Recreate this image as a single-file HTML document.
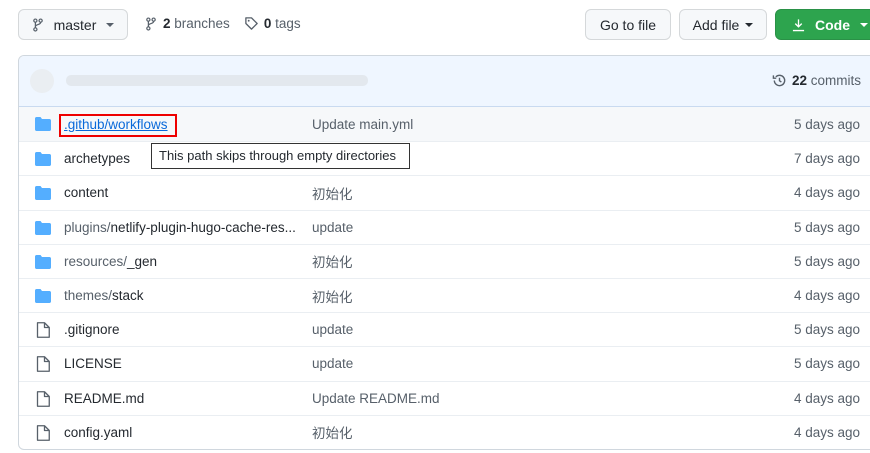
<!DOCTYPE html><html><head><meta charset="utf-8"><style>
*{box-sizing:border-box}body{margin:0;width:870px;height:453px;overflow:hidden;background:#fff;font-family:"Liberation Sans","Noto Sans CJK SC",sans-serif;font-size:13.5px;color:#24292f;position:relative}
.btn{position:absolute;top:9px;height:31px;border:1px solid #d5d8da;border-radius:6px;background:#f6f8fa;display:flex;align-items:center;justify-content:center;font-size:14px}
.caret{display:inline-block;width:0;height:0;border-left:4px solid transparent;border-right:4px solid transparent;border-top:4px solid currentColor;margin-left:6px}
.box{position:absolute;left:18px;top:55px;width:870px;height:395px;border:1px solid #d0d7de;border-radius:6px;overflow:hidden}
.hdr{height:51px;background:#eff6ff;border-bottom:1px solid #c9daf0;position:relative}
.row{height:34.2px;border-top:1px solid #eaeef2;position:relative;display:flex;align-items:center;white-space:nowrap}
.ic{position:absolute;left:16px;top:10px}
.n{position:absolute;left:45px}
.m{position:absolute;left:293px}
.d{position:absolute;right:27px;color:#57606a}
</style></head><body>
<div class="btn" style="left:18px;width:110px"><svg width="12" height="14" viewBox="0 0 12 16" style="margin-right:10px"><circle cx="3" cy="3" r="1.8" fill="none" stroke="#57606a" stroke-width="1.4"/><circle cx="3" cy="13" r="1.8" fill="none" stroke="#57606a" stroke-width="1.4"/><circle cx="9" cy="3" r="1.8" fill="none" stroke="#57606a" stroke-width="1.4"/><path d="M3 5v6M9 5c0 3-6 2-6 5" fill="none" stroke="#57606a" stroke-width="1.4"/></svg>master<span class="caret" style="margin-left:10px;color:#57606a"></span></div>
<div style="position:absolute;left:145px;top:16px;color:#57606a;display:flex;align-items:center"><svg width="12" height="14" viewBox="0 0 12 16" style="margin-right:6px"><circle cx="3" cy="3" r="1.8" fill="none" stroke="#57606a" stroke-width="1.4"/><circle cx="3" cy="13" r="1.8" fill="none" stroke="#57606a" stroke-width="1.4"/><circle cx="9" cy="3" r="1.8" fill="none" stroke="#57606a" stroke-width="1.4"/><path d="M3 5v6M9 5c0 3-6 2-6 5" fill="none" stroke="#57606a" stroke-width="1.4"/></svg><b style="color:#24292f">2</b>&nbsp;branches<svg width="15" height="15" viewBox="0 0 16 16" style="margin:0 5px 0 14px"><path d="M2 2h6l6 6-6 6-6-6z" fill="none" stroke="#57606a" stroke-width="1.4" stroke-linejoin="round"/><circle cx="5" cy="5" r="1" fill="#57606a"/></svg><b style="color:#24292f">0</b>&nbsp;tags</div>
<div class="btn" style="left:585px;width:86px">Go to file</div>
<div class="btn" style="left:679px;width:88px">Add file<span class="caret"></span></div>
<div class="btn" style="left:775px;width:110px;background:#2da44e;border-color:#2a9147;color:#fff;font-weight:bold;justify-content:flex-start;padding-left:16px"><svg width="13" height="14" viewBox="0 0 14 14" style="margin-right:10px"><path d="M7 1v8M3.5 5.5L7 9l3.5-3.5M1 13h12" fill="none" stroke="#fff" stroke-width="1.4"/></svg>Code<span class="caret" style="margin-left:10px"></span></div>
<div class="box">
<div class="hdr"><div style="position:absolute;left:11px;top:13px;width:24px;height:24px;border-radius:50%;background:#eaeef2"></div><div style="position:absolute;left:47px;top:19px;width:302px;height:11px;border-radius:5px;background:#e3e8ee"></div>
<div style="position:absolute;right:26px;top:17px;color:#57606a;display:flex;align-items:center"><svg width="15" height="15" viewBox="0 0 16 16" style="margin-right:5px"><path d="M2.5 8a5.5 5.5 0 1 0 1.6-3.9" fill="none" stroke="#57606a" stroke-width="1.5"/><path d="M1.5 2.5v3h3" fill="none" stroke="#57606a" stroke-width="1.5"/><path d="M8 5v3.3l2 1.3" fill="none" stroke="#57606a" stroke-width="1.5"/></svg><b style="color:#24292f">22</b>&nbsp;commits</div></div>
<div id="rows"></div>
</div>
<div style="position:absolute;left:59px;top:114px;width:118px;height:23px;border:2px solid #e00"></div>
<div style="position:absolute;left:151px;top:143px;width:259px;height:26px;border:1px solid #333;background:#fff;padding-left:7px;line-height:24px;font-size:13px;white-space:nowrap">This path skips through empty directories</div>
<script>
var F='<svg class="ic" width="16" height="14" viewBox="0 0 16 14"><path d="M0 1.5C0 .7.7 0 1.5 0h4l1.5 2h7.5c.8 0 1.5.7 1.5 1.5v9c0 .8-.7 1.5-1.5 1.5h-13C.7 14 0 13.3 0 12.5z" fill="#54aeff"/></svg>';
var D='<svg class="ic" width="14" height="16" viewBox="0 0 14 16" style="top:9px;left:17px"><path d="M1.5 .75h7l4.75 4.75v9.75h-11.75z M8.5 .75v4.75h4.75" fill="none" stroke="#57606a" stroke-width="1.3" stroke-linejoin="round"/></svg>';
var r=[[F,'<span style="color:#0969da;text-decoration:underline">.github/workflows</span>','Update main.yml','5 days ago'],
[F,'archetypes','','7 days ago'],[F,'content','初始化','4 days ago'],
[F,'<span style="color:#57606a">plugins/</span>netlify-plugin-hugo-cache-res...','update','5 days ago'],
[F,'<span style="color:#57606a">resources/</span>_gen','初始化','5 days ago'],
[F,'<span style="color:#57606a">themes/</span>stack','初始化','4 days ago'],
[D,'.gitignore','update','5 days ago'],[D,'LICENSE','update','5 days ago'],
[D,'README.md','Update README.md','4 days ago'],[D,'config.yaml','初始化','4 days ago']];
var h='';r.forEach(function(x,i){h+='<div class="row"'+(i==0?' style="background:#f6f8fa;border-top:none"':'')+'>'+x[0]+'<span class="n">'+x[1]+'</span><span class="m" style="color:#57606a">'+x[2]+'</span><span class="d">'+x[3]+'</span></div>'});
document.getElementById('rows').innerHTML=h;
</script>
</body></html>
